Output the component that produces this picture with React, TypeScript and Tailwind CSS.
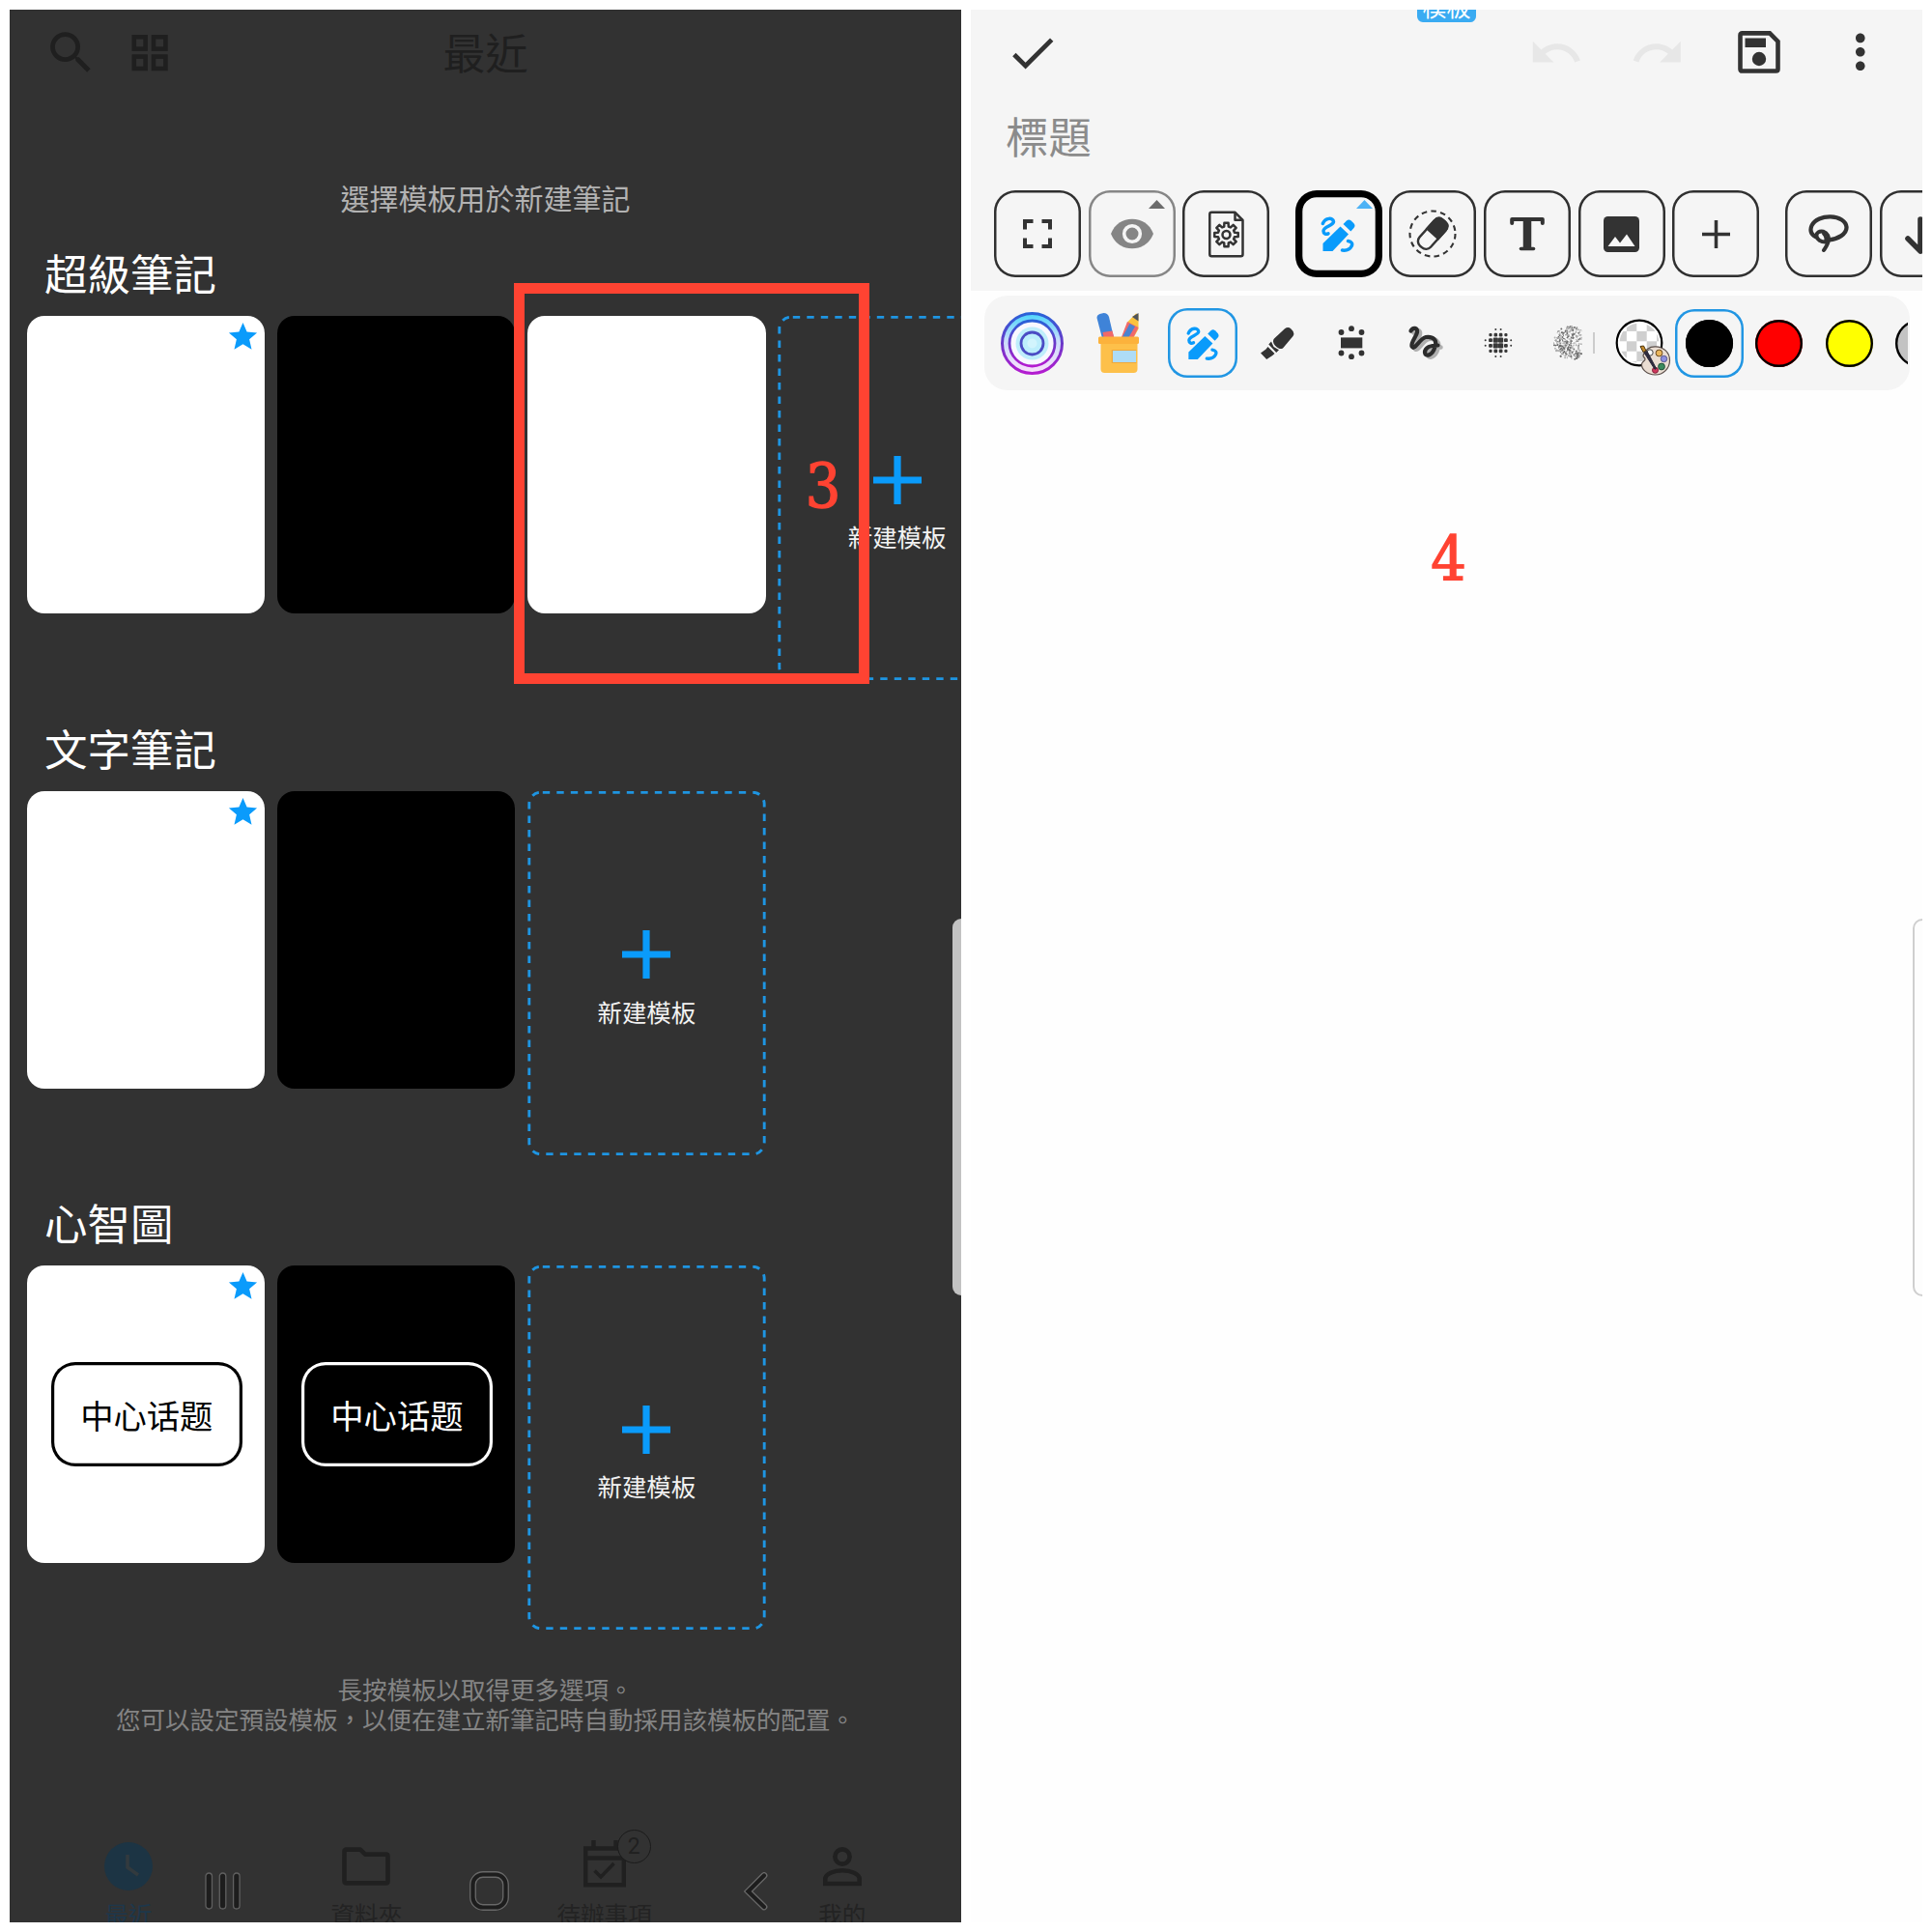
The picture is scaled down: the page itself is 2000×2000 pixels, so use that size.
import React from "react";
import { MdCheck, MdUndo, MdRedo, MdMoreVert, MdSearch, MdStar } from "react-icons/md";

const BLUE = "#0a9bfb";
const INK = "#333333";

/* ---------- left screen ---------- */

function GridIcon() {
  return (
    <svg width="38" height="38" viewBox="0 0 38 38" fill="none" stroke="#1f1f1f" strokeWidth="4.6">
      <rect x="2.8" y="2.2" width="11.8" height="12.4" />
      <rect x="23" y="2.2" width="12.4" height="12.4" />
      <rect x="2.8" y="22.6" width="11.8" height="12.4" />
      <rect x="23" y="22.6" width="12.4" height="12.4" />
    </svg>
  );
}

type CardKind = "white" | "black";

function Card({ kind, star, topic }: { kind: CardKind; star?: boolean; topic?: boolean }) {
  return (
    <div
      className={
        "relative flex h-[308px] w-[246.4px] shrink-0 items-center justify-center rounded-[18px] " +
        (kind === "white" ? "bg-white text-black" : "bg-black text-white")
      }
    >
      {star && <MdStar className="absolute top-[4px] right-[5px] size-[35px] text-[#0a9bfb]" />}
      {topic && (
        <div className="ml-[1.5px] flex h-[108px] w-[198px] items-center justify-center rounded-[25px] font-['Noto_Sans_CJK_SC',sans-serif] text-[34.3px] leading-none shadow-[inset_0_0_0_3.2px_currentColor]">
          中心话题
        </div>
      )}
    </div>
  );
}

function NewTemplate() {
  return (
    <div className="relative flex h-[377px] w-[246.4px] shrink-0 flex-col items-center pt-[144.5px]">
      <svg className="absolute inset-0" width="247" height="377" viewBox="0 0 247 377" fill="none">
        <rect x="1.8" y="1.2" width="243.4" height="374.6" rx="12" stroke="#1e95e2" strokeWidth="2.9" strokeDasharray="7.4 7.1" strokeDashoffset="-2" />
      </svg>
      <svg width="50" height="50" viewBox="0 0 50 50" fill={BLUE}>
        <path d="M21.4 0h7.2v21.4H50v7.2H28.6V50h-7.2V28.6H0v-7.2h21.4z" />
      </svg>
      <div className="mt-[16.5px] text-[25.4px] leading-[34px] text-[#f2f2f2]">新建模板</div>
    </div>
  );
}

function Section({ title, children }: { title: string; children: React.ReactNode }) {
  return (
    <section className="h-[491.7px] shrink-0">
      <h2 className="h-[75px] pl-[36px] text-[44.5px] leading-[60px] text-white">{title}</h2>
      <div className="flex gap-[12.8px] pl-[17.8px]">{children}</div>
    </section>
  );
}

function NavTab({ label, active, children }: { label: string; active?: boolean; children: React.ReactNode }) {
  return (
    <div className="flex flex-1 flex-col items-center">
      <div className="relative flex h-[60px] shrink-0 items-center justify-center">{children}</div>
      <div className={"mt-[1px] shrink-0 text-[24.6px] leading-[36px] " + (active ? "text-[#1d374b]" : "text-[#232323]")}>{label}</div>
    </div>
  );
}

function BottomTabs() {
  return (
    <div className="flex h-[88px]">
      <NavTab label="最近" active>
        <svg width="50" height="50" viewBox="0 0 50 50">
          <circle cx="25" cy="25" r="25" fill="#1c3444" />
          <path d="M24 13v13l11 8" fill="none" stroke="#323a3e" strokeWidth="3.6" />
        </svg>
      </NavTab>
      <NavTab label="資料夾">
        <svg width="50" height="40" viewBox="0 0 50 40" fill="none" stroke="#202020" strokeWidth="4.6" strokeLinejoin="round">
          <path d="M4.5 2.6H19l5 5h21.5q2 0 2 2V35.4q0 2-2 2H4.5q-2 0-2-2V4.6q0-2 2-2z" />
        </svg>
      </NavTab>
      <NavTab label="待辦事項">
        <svg className="mt-[-4px]" width="44" height="50" viewBox="0 0 44 50" fill="none" stroke="#202020" strokeWidth="4.4">
          <path d="M2.2 8.5h39.6v37.8H2.2zM2.2 18.5h39.6M10.5 0v8M33.5 0v8" />
          <path d="M11.5 31.500l6.500 6.500 13.500-14" strokeWidth="3.600" />
        </svg>
        <div className="absolute top-[-8px] left-[35px] flex size-[35px] items-center justify-center rounded-full border-[1px] border-[#1b1b1b] bg-[#323232] font-['Roboto',sans-serif] text-[23px] leading-none text-[#202020]">
          2
        </div>
      </NavTab>
      <NavTab label="我的">
        <svg width="40" height="41" viewBox="0 0 40 41" fill="none" stroke="#202020" strokeWidth="4.600">
          <circle cx="20" cy="10" r="7.600" />
          <path d="M2.300 38v-5c0-5 9-8.700 17.700-8.700s17.700 3.700 17.700 8.700v5z" />
        </svg>
      </NavTab>
    </div>
  );
}

function SystemKeys() {
  return (
    <div className="absolute bottom-[12px] left-[202px] flex items-center">
      <svg width="37" height="40" viewBox="0 0 37 40" fill="#1d1d1d" stroke="#606060" strokeWidth="1.300">
        <rect x="1" y="1" width="6.500" height="37" rx="3.200" />
        <rect x="15.300" y="1" width="6.500" height="37" rx="3.200" />
        <rect x="29.600" y="1" width="6.500" height="37" rx="3.200" />
      </svg>
      <svg className="ml-[236.500px]" width="41" height="41" viewBox="0 0 41 41" fill="none">
        <rect x="3.500" y="3.500" width="34" height="34" rx="10.500" stroke="#686868" strokeWidth="6.800" />
        <rect x="3.500" y="3.500" width="34" height="34" rx="10.500" stroke="#1d1d1d" strokeWidth="4.200" />
      </svg>
      <svg className="ml-[243.500px]" width="26" height="40" viewBox="0 0 26 40" fill="none" strokeLinecap="round" strokeLinejoin="miter">
        <path d="M21 3.500L4.500 20 21 36" stroke="#686868" strokeWidth="6.800" />
        <path d="M21 3.500L4.500 20 21 36" stroke="#1d1d1d" strokeWidth="4.200" />
      </svg>
    </div>
  );
}

function TemplateScreen() {
  return (
    <div className="relative flex h-[1980px] w-[985px] flex-col overflow-hidden bg-[#323232]">
      <header className="relative flex h-[89px] shrink-0 items-center pl-[35px] text-[#1f1f1f]">
        <MdSearch className="size-[57px]" />
        <div className="ml-[34px]">
          <GridIcon />
        </div>
        <div className="absolute inset-x-0 top-[13px] text-center text-[44px] leading-[60px]">最近</div>
      </header>
      <p className="mt-[84px] h-[66px] shrink-0 text-center text-[30px] leading-[42px] text-[#b2b2b2]">選擇模板用於新建筆記</p>
      <div className="mt-[3px] shrink-0">
        <Section title="超級筆記">
          <Card kind="white" star />
          <Card kind="black" />
          <Card kind="white" />
          <NewTemplate />
        </Section>
        <Section title="文字筆記">
          <Card kind="white" star />
          <Card kind="black" />
          <NewTemplate />
        </Section>
        <Section title="心智圖">
          <Card kind="white" star topic />
          <Card kind="black" topic />
          <NewTemplate />
        </Section>
      </div>
      <div className="mt-[5px] text-center text-[25.5px] leading-[31px] whitespace-nowrap text-[#848484]">
        <p>長按模板以取得更多選項。</p>
        <p>您可以設定預設模板，以便在建立新筆記時自動採用該模板的配置。</p>
      </div>
      <div className="mt-auto">
        <BottomTabs />
      </div>
      <SystemKeys />
      <div className="absolute top-[941px] right-0 h-[390px] w-[9.500px] rounded-l-[10px] bg-[#c2c2c2]" />
      <div className="absolute top-[283px] left-[522px] h-[415px] w-[367.500px] border-[11px] border-[#ff4332]" />
      <div className="absolute top-[444px] left-[822px] w-[40px] text-center font-['DejaVu_Serif_Condensed','DejaVu_Serif',serif] text-[64px] leading-[100px] text-[#ff4332] [-webkit-text-stroke:1.4px_#ff4332]">3</div>
    </div>
  );
}

/* ---------- right screen ---------- */

function PenIcon({ size }: { size: number }) {
  return (
    <svg width={size} height={size} viewBox="0 0 36 37" fill="none">
      <path d="M1.800 7.500C4.500 1 12.500 1 13 5.500 13.200 9.500 2.500 10.500 2.500 15 2.500 18 5 19 7.500 17.800" stroke={BLUE} strokeWidth="3.500" strokeLinecap="round" />
      <path d="M20 10.500l8.500 8L12 36H2V28z" fill={BLUE} />
      <path d="M23 8l3.500-3.500q2.200-2 4.700 0l2.800 2.800q2 2.400 0 4.800L30.800 15.500z" fill={BLUE} />
      <path d="M28 25.500c4 .5 5 3 3.500 5.500-1.500 3-5.500 4.500-9.500 4" stroke={BLUE} strokeWidth="3.500" strokeLinecap="round" />
    </svg>
  );
}

function SaveIcon() {
  return (
    <svg width="44" height="44" viewBox="0 0 44 44" fill={INK}>
      <path d="M4.500 2.400H33L41.500 11V39.500q0 2-2 2h-35q-2 0-2-2V4.400q0-2 2-2z" fill="none" stroke={INK} strokeWidth="4.600" />
      <rect x="7.500" y="7.500" width="21.500" height="9.500" />
      <circle cx="22" cy="29" r="7.200" />
    </svg>
  );
}

function FullscreenIcon() {
  return (
    <svg width="30" height="30" viewBox="0 0 30 30" fill="none" stroke={INK} strokeWidth="4">
      <path d="M2 10.500V2h8.500M19.500 2H28v8.500M28 19.500V28h-8.500M10.500 28H2v-8.500" />
    </svg>
  );
}

function EyeIcon() {
  return (
    <svg width="46" height="32" viewBox="0 0 46 32">
      <path d="M1 16C5 6 13 .8 23 .8S41 6 45 16C41 26 33 31.200 23 31.200S5 26 1 16z" fill="#858585" />
      <circle cx="23" cy="16" r="8.300" fill="#858585" stroke="#f5f5f5" strokeWidth="3.600" />
    </svg>
  );
}

function PageGearIcon() {
  const teeth = [0, 1, 2, 3, 4, 5, 6, 7];
  const pts: string[] = [];
  teeth.forEach((t) => {
    const a = (t * Math.PI) / 4 - Math.PI / 2;
    [
      [-0.26, 8.8],
      [-0.17, 12.4],
      [0.17, 12.4],
      [0.26, 8.8],
    ].forEach(([d, r]) => pts.push(`${(18.5 + r * Math.cos(a + d)).toFixed(2)},${(24.5 + r * Math.sin(a + d)).toFixed(2)}`));
  });
  return (
    <svg width="37" height="49" viewBox="0 0 37 48" fill="none" stroke={INK} strokeWidth="2.500" strokeLinejoin="round">
      <path d="M3 1.300h24.500l8 8V44.700q0 2-2 2H3.300q-2 0-2-2V3.300q0-2 2-2z" />
      <path d="M27.500 1.300v8h8" />
      <polygon points={pts.join(" ")} />
      <circle cx="18.500" cy="24.500" r="4" />
    </svg>
  );
}

function EraserIcon() {
  return (
    <svg width="50" height="50" viewBox="0 0 50 50" fill="none">
      <circle cx="25" cy="25" r="23.500" stroke={INK} strokeWidth="2.100" strokeDasharray="5.600 4.250" />
      <g transform="rotate(42 25 25)">
        <rect x="17.300" y="7" width="15.400" height="36" rx="6.500" stroke={INK} strokeWidth="2.400" />
        <path d="M16 26V14q0-8 6.500-8h5q6.500 0 6.500 8v12z" fill={INK} />
      </g>
    </svg>
  );
}

function SerifT() {
  return (
    <svg width="36" height="36" viewBox="0 0 36 36" fill="none" stroke={INK} strokeLinecap="round" strokeLinejoin="round">
      <path d="M2.200 7V3h31.600v4" strokeWidth="4" />
      <path d="M18 4v28" strokeWidth="8.500" strokeLinecap="butt" />
      <path d="M11.500 33.500h13" strokeWidth="3.600" />
    </svg>
  );
}

function ImageIcon() {
  return (
    <svg width="37" height="37" viewBox="0 0 37 37">
      <rect width="37" height="37" rx="4.500" fill={INK} />
      <path d="M4.500 31L12 21l5 6.500L24 18.500 32.500 31z" fill="#f7f7f7" />
    </svg>
  );
}

function LassoIcon() {
  return (
    <svg width="42" height="40" viewBox="0 0 42 40" fill="none" stroke={INK} strokeWidth="4.300" strokeLinecap="round">
      <path d="M7.500 23C2.500 20.500 1.500 16 3.500 11.500 6.500 5 15 2.200 23 2.400c9 .2 16 4.400 16.500 10.600.5 7.500-9 12.500-18 13.300" />
      <path d="M17.500 28.500c-4.500 0-8.500-2.500-9-6s3-5.800 7-4.800c4.200 1.300 6.500 5.800 5 10.800-1 3.500-2.500 5.500-4.500 8.500" strokeWidth="4" />
      <path d="M15.500 20c2.500 2.500 3 5.500 2 8.500" strokeWidth="3" />
    </svg>
  );
}

type ToolProps = { children: React.ReactNode; className?: string };

function Tool({ children, className = "shadow-[inset_0_0_0_2.5px_#303030]" }: ToolProps) {
  return <div className={"relative flex size-[90px] shrink-0 items-center justify-center rounded-[22px] " + className}>{children}</div>;
}

function Corner({ color, className }: { color: string; className: string }) {
  return (
    <svg className={"absolute " + className} width="17" height="9" viewBox="0 0 17 9" fill={color}>
      <path d="M0 9L8.500 0 17 9z" />
    </svg>
  );
}

function RingsIcon() {
  return (
    <svg width="65" height="65" viewBox="0 0 65 65" fill="none">
      <defs>
        <linearGradient id="ringLine" x1="0" y1="0" x2="0" y2="1">
          <stop offset="0" stopColor="#2a62d8" />
          <stop offset="0.500" stopColor="#6a38c8" />
          <stop offset="1" stopColor="#b41cd0" />
        </linearGradient>
        <linearGradient id="ringFill" x1="0" y1="0" x2="0" y2="1">
          <stop offset="0" stopColor="#4cd6fb" />
          <stop offset="0.450" stopColor="#c9dcfb" />
          <stop offset="1" stopColor="#fbe0fb" />
        </linearGradient>
      </defs>
      <circle cx="32.500" cy="32.500" r="31" fill="url(#ringFill)" stroke="url(#ringLine)" strokeWidth="3" />
      <circle cx="32.500" cy="32.500" r="23.500" fill="#f8f8ff" stroke="url(#ringLine)" strokeWidth="2.800" />
      <circle cx="32.500" cy="32.500" r="17" fill="#bfeefb" />
      <circle cx="32.500" cy="32.500" r="11.500" fill="#bdeefc" stroke="#4b4cc4" strokeWidth="2.800" />
      <circle cx="32.500" cy="32.500" r="5" fill="#d2f4fd" />
    </svg>
  );
}

function PenCupIcon() {
  return (
    <svg width="46" height="64" viewBox="0 0 46 64">
      <path d="M1.500 6q0-3 3-4l4-1q4 0 5.500 4l6 26H8z" fill="#3f83d8" />
      <path d="M7.500 21l10-1.500 3 11.500H9.500z" fill="#f0696a" />
      <path d="M42 1.500l2.500 1v15L37 31H25.500l8-21z" fill="#fac33e" />
      <path d="M33 10l11.500 6L37 31H25z" fill="#f0696a" />
      <path d="M35.500 12l5.500 3-8.500 14.500-5.500-2z" fill="#4a83cf" />
      <path d="M38 5l6.500-4v8.500z" fill="#50555c" />
      <path d="M5.500 30h38v29q0 4-4 4h-30q-4 0-4-4z" fill="#fdc04a" />
      <rect x="3" y="25.500" width="42" height="7.500" rx="1.500" fill="#fcb23c" />
      <rect x="17.500" y="40" width="24.500" height="12" fill="#aedcf6" />
      <path d="M17 39.500h25.500M17 52.500h25.500M17.300 39v14" stroke="#f0a83a" strokeWidth="1.200" />
    </svg>
  );
}

function MarkerIcon() {
  return (
    <svg width="35" height="35" viewBox="0 0 35 35" fill={INK}>
      <path d="M14 12.500L25 2.200q3.500-2.500 6.500.3 4.500 4 2 7.500L23 22.500q-2 1-4 .2-5.500-3-6-7-.2-2 1-3.200z" />
      <path d="M11 15.500l2.500 5.500 5.500 3.300-2.800 2.600L8.300 18.500z" />
      <path d="M7.500 21l7 7-2.200 2L6.200 34 0 27.500l5.500-4z" />
    </svg>
  );
}

function FrameDotsIcon() {
  const dots = [
    [3.5, 7], [14, 3.2], [24.5, 7],
    [3.5, 28.5], [14, 32.2], [24.5, 28.5],
  ];
  return (
    <svg width="28" height="36" viewBox="0 0 28 36" fill={INK}>
      <rect x="3" y="12.400" width="22.300" height="11" />
      {dots.map(([x, y]) => (
        <circle key={`${x}-${y}`} cx={x} cy={y} r="2.900" />
      ))}
    </svg>
  );
}

function SquiggleIcon() {
  const d = "M2.500 5.500C4.500 1.500 10 2 9 7 8 12 2.500 17 3.500 21.500 6 27 12 13 18 12 25.500 11 30 15 27.500 22 25 31 17.500 33 17 28 17 22.500 23 20.500 30.500 20.500";
  return (
    <svg className="overflow-visible" width="37" height="37" viewBox="0 0 37 37" fill="none" strokeLinecap="round">
      <path d={d} stroke="#b0b0b0" strokeWidth="4.500" transform="translate(3 2)" />
      <path d={d} stroke="#2c2c2c" strokeWidth="4.200" />
    </svg>
  );
}

function HalftoneIcon() {
  const sizes = [
    [0, 0, 2, 2, 0, 0],
    [0, 3.2, 3.6, 3.6, 3.2, 0],
    [2, 3.8, 5.2, 5.2, 3.8, 2],
    [2, 3.8, 5.2, 5.2, 3.8, 2],
    [0, 3.2, 3.8, 3.8, 3.2, 0],
    [0, 0, 2, 2, 0, 0],
  ];
  return (
    <svg className="ml-[2px]" width="30" height="32" viewBox="0 0 30 32" fill="#383838">
      {sizes.flatMap((row, r) =>
        row.map((s, c) => (s ? <rect key={`${r}-${c}`} x={1.7 + c * 5.3 - s / 2} y={2 + r * 5.6 - s / 2} width={s} height={s} rx="1.2" /> : null))
      )}
    </svg>
  );
}

function SprayIcon() {
  let seed = 11;
  const rnd = () => {
    seed = (seed * 16807) % 2147483647;
    return seed / 2147483647;
  };
  const grains: React.ReactNode[] = [];
  for (let i = 0; i < 620; i++) {
    const x = rnd() * 36;
    const y = rnd() * 36;
    const g = rnd();
    if (Math.hypot(x - 18, y - 18) > 17.5 || x > 29) continue;
    grains.push(<circle key={i} cx={x} cy={y} r="1" fill={g > 0.65 ? "#6e6e6e" : g > 0.3 ? "#b4b4b4" : "#fafafa"} />);
  }
  return (
    <svg className="mr-[1px]" width="31" height="37" viewBox="0 0 31 37">
      {grains}
    </svg>
  );
}

function TransparentSwatch() {
  const cells: React.ReactNode[] = [];
  for (let r = 0; r < 5; r++)
    for (let c = 0; c < 5; c++)
      if ((r + c) % 2 === 1) cells.push(<rect key={`${r}-${c}`} x={0.5 + c * 10.4} y={1.5 + r * 10.4} width="10.4" height="10.4" fill="#cfcfcf" />);
  return (
    <svg width="56" height="58" viewBox="0 0 56 58" className="overflow-visible">
      <clipPath id="swatchClip">
        <circle cx="24" cy="24" r="20.500" />
      </clipPath>
      <circle cx="24" cy="24" r="23.300" fill="#fff" />
      <g clipPath="url(#swatchClip)">{cells}</g>
      <circle cx="24" cy="24" r="23.300" fill="none" stroke="#000" strokeWidth="2.200" />
      <path d="M28 37c2-6 7-9.500 13-9.200 8 .3 14.500 6 14.500 14.200S49 57 40.500 57C32 57 26 51 26.500 46c.3-3 4-3 3.500-5.500-.2-1.300-2.300-2-2-3.500z" fill="#eaddd2" stroke="#5b4f4a" strokeWidth="1.200" />
      <circle cx="35" cy="34" r="3.200" fill="#fff" stroke="#444" />
      <circle cx="44.500" cy="34.500" r="3.400" fill="#eab65c" stroke="#6b4a20" />
      <circle cx="49.500" cy="40.500" r="3.200" fill="#8c8fe0" stroke="#555590" />
      <circle cx="47" cy="48.500" r="3.400" fill="#3a8a5e" stroke="#205038" />
      <circle cx="40.500" cy="52.300" r="3" fill="#d0375c" stroke="#80203a" />
      <path d="M29 34l3-1.500 9.500 18-1.500.8z" fill="#2c2a3c" stroke="#2c2a3c" />
      <path d="M25 27.500l3.500-.5 2.500 5-3 1.500z" fill="#c58a28" stroke="#4a3410" />
    </svg>
  );
}

function Swatch({ className }: { className: string }) {
  return <div className={"size-[49px] shrink-0 rounded-full shadow-[inset_0_0_0_2.4px_#000] " + className} />;
}

function Slot({ width, children }: { width: string; children: React.ReactNode }) {
  return <div className={"flex h-full shrink-0 items-center justify-center " + width}>{children}</div>;
}

function EditorScreen() {
  return (
    <div className="relative flex h-[1980px] w-[985px] flex-col overflow-hidden bg-[#fefefe]">
      <div className="h-[291px] shrink-0 bg-[#f5f5f5]">
        <div className="flex h-[89px] items-center pl-[35px] text-[#333333]">
          <MdCheck className="size-[57.600px]" />
          <MdUndo className="ml-[484.500px] size-[57.600px] text-[#e7e7e7]" />
          <MdRedo className="ml-[47.500px] size-[57.600px] text-[#e7e7e7]" />
          <div className="mt-[-1px] ml-[54px]">
            <SaveIcon />
          </div>
          <MdMoreVert className="mt-[-1px] ml-[54.500px] size-[57.600px]" />
        </div>
        <div className="h-[98px] pt-[11px] pl-[36px] text-[44.400px] leading-[60px] text-[#8b8b8b]">標題</div>
        <div className="flex gap-[7.650px] pl-[23.900px]">
          <Tool>
            <FullscreenIcon />
          </Tool>
          <Tool className="shadow-[inset_0_0_0_2.5px_#868686]">
            <EyeIcon />
            <Corner color="#6c6c6c" className="top-[9.500px] right-[10.500px]" />
          </Tool>
          <Tool>
            <PageGearIcon />
          </Tool>
          <Tool className="ml-[19px] shadow-[inset_0_0_0_7.300px_#000]">
            <PenIcon size={37} />
            <Corner color="#4db2f5" className="top-[9.500px] right-[10px]" />
          </Tool>
          <Tool>
            <EraserIcon />
          </Tool>
          <Tool>
            <SerifT />
          </Tool>
          <Tool>
            <ImageIcon />
          </Tool>
          <Tool>
            <svg width="29" height="29" viewBox="0 0 29 29" stroke={INK} strokeWidth="3.500">
              <path d="M14.500 0v29M0 14.500h29" />
            </svg>
          </Tool>
          <Tool className="ml-[19px] shadow-[inset_0_0_0_2.5px_#303030]">
            <LassoIcon />
          </Tool>
          <Tool>
            <svg className="mt-[4px] mr-[6px]" width="36" height="40" viewBox="0 0 36 40" fill="none" stroke={INK} strokeWidth="5.600" strokeLinecap="round" strokeLinejoin="round">
              <path d="M18 3v33M5 23l13 13L31 23" />
            </svg>
          </Tool>
        </div>
      </div>

      <div className="mt-[5px] ml-[14px] flex h-[98px] w-[958px] shrink-0 items-center overflow-hidden rounded-[24px] bg-[#f5f5f5]">
        <Slot width="w-[99px]">
          <RingsIcon />
        </Slot>
        <Slot width="w-[78px]">
          <PenCupIcon />
        </Slot>
        <Slot width="w-[98px]">
          <div className="flex size-[72px] items-center justify-center rounded-[20px] shadow-[inset_0_0_0_2.5px_#2196e3]">
            <PenIcon size={35} />
          </div>
        </Slot>
        <Slot width="w-[57px]">
          <MarkerIcon />
        </Slot>
        <Slot width="w-[96px]">
          <FrameDotsIcon />
        </Slot>
        <Slot width="w-[58px]">
          <SquiggleIcon />
        </Slot>
        <Slot width="w-[90px]">
          <HalftoneIcon />
        </Slot>
        <Slot width="w-[58px]">
          <SprayIcon />
        </Slot>
        <div className="ml-[-4px] h-[22px] w-[1.500px] shrink-0 bg-[#cccccc]" />
        <div className="mt-[9px] ml-[22.500px] shrink-0">
          <TransparentSwatch />
        </div>
        <div className="ml-[5px] flex size-[71px] shrink-0 items-center justify-center rounded-[20px] shadow-[inset_0_0_0_2.5px_#2196e3]">
          <Swatch className="bg-black" />
        </div>
        <div className="ml-[12px] flex w-[158px] gap-[23.500px] overflow-hidden">
          <Swatch className="bg-[#ff0000]" />
          <Swatch className="bg-[#ffff00]" />
          <Swatch className="bg-[#c3c3c3]" />
        </div>
      </div>

      <div className="absolute top-[-17px] left-[462px] flex h-[30px] w-[61px] items-center justify-center rounded-[6px] bg-[#3aabf2] text-[25px] leading-none text-white">
        <span className="pb-[4px]">模板</span>
      </div>
      <div className="absolute top-[519px] left-[474px] w-[41px] text-center font-['DejaVu_Serif_Condensed','DejaVu_Serif',serif] text-[64px] leading-[100px] text-[#ff4332] [-webkit-text-stroke:1.4px_#ff4332]">4</div>
      <div className="absolute top-[941px] right-[-6px] h-[391px] w-[16px] rounded-l-[10px] border-2 border-[#cfcfcf] bg-[#fdfdfd]" />
    </div>
  );
}

export default function App() {
  return (
    <div className="flex h-[2000px] w-[2000px] gap-[10px] overflow-hidden bg-white p-[10px] font-['Noto_Sans_CJK_TC',sans-serif]">
      <TemplateScreen />
      <EditorScreen />
    </div>
  );
}
